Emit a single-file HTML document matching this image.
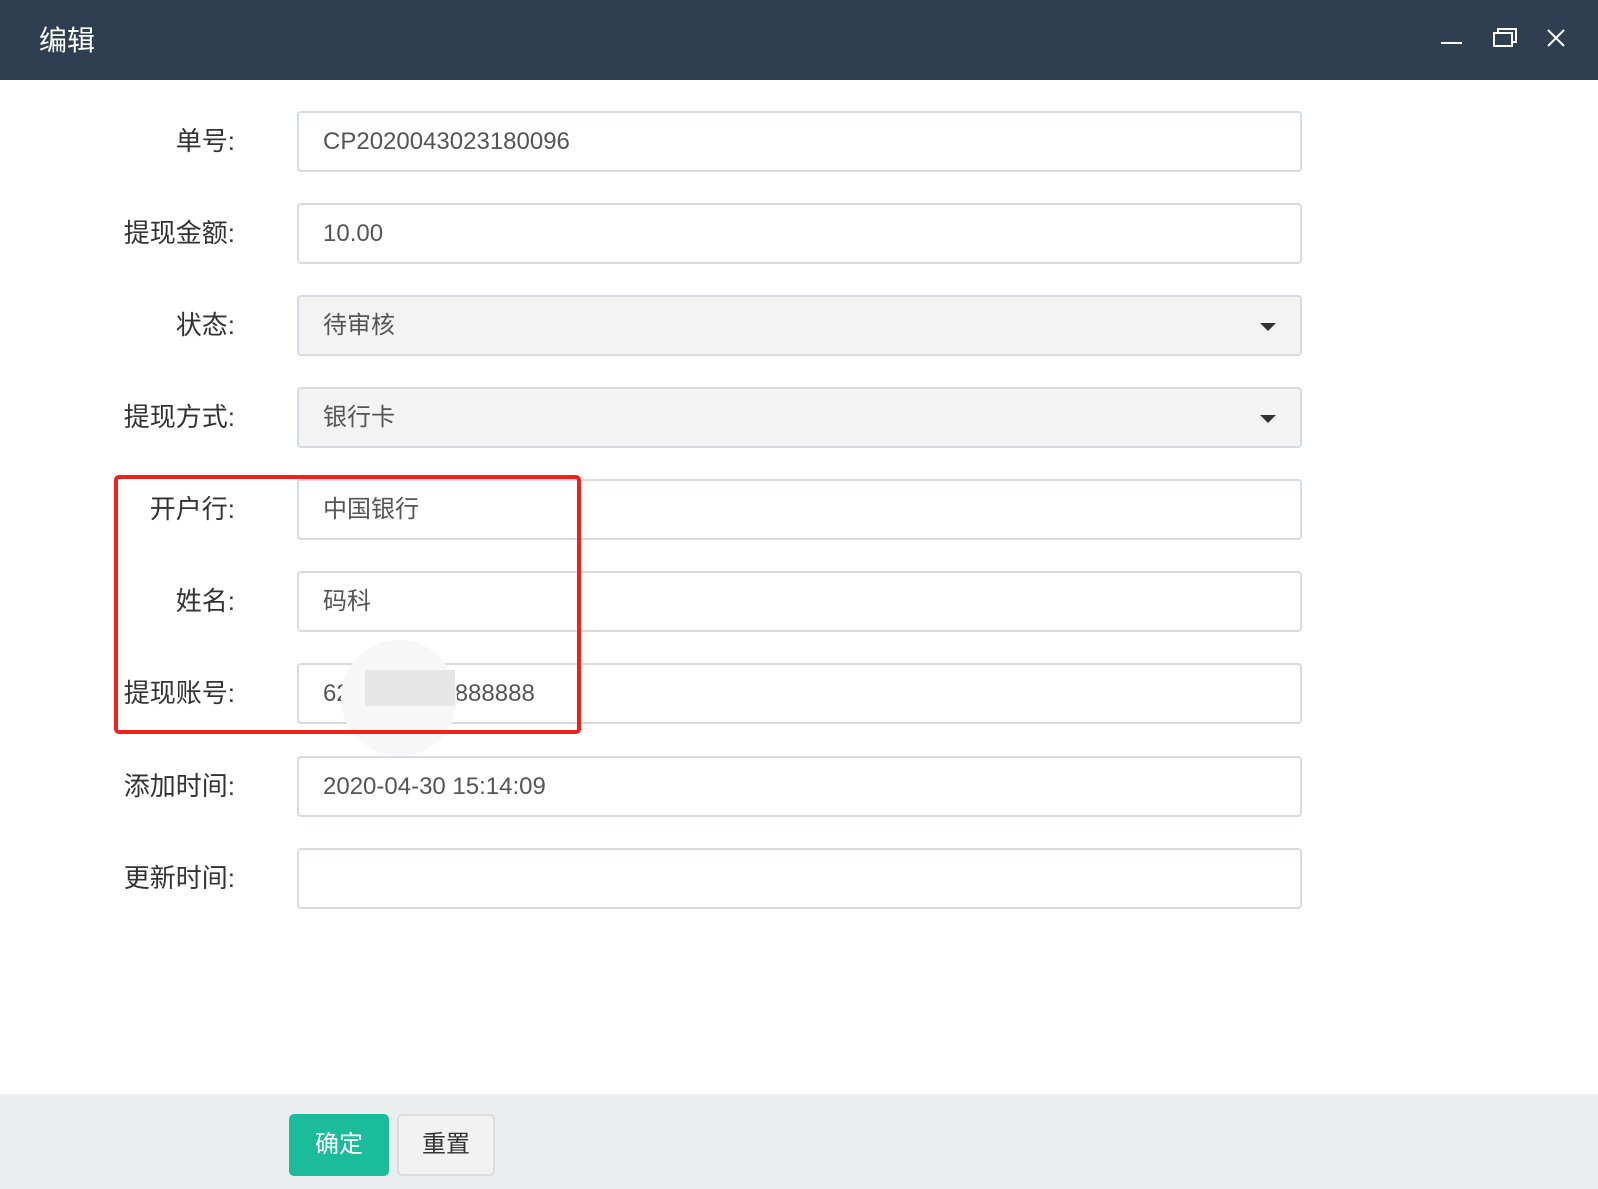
<!DOCTYPE html>
<html><head><meta charset="utf-8"><style>
body{margin:0;width:1598px;height:1189px;position:relative;background:#fff;font-family:"Liberation Sans","Noto Sans CJK SC",sans-serif;overflow:hidden}
.hd{position:absolute;left:0;top:0;width:1598px;height:80px;background:#2f3e50}
.hd .t{position:absolute;left:39px;top:19px;color:#fff;font-size:28px}
.lab{position:absolute;right:1363px;font-size:26px;color:#333;line-height:61px;white-space:nowrap}
.in{position:absolute;left:297px;border:2px solid #d7dae2;border-radius:4px;font-size:24px;color:#555;line-height:57px;padding-left:24px;box-sizing:border-box;width:1005px;height:61px}
.sel{background:#f3f3f3}
.arr{position:absolute;right:24px;top:26px;border-left:8px solid transparent;border-right:8px solid transparent;border-top:8px solid #333}
.ft{position:absolute;left:0;top:1094px;width:1598px;height:95px;background:#ebeeef}
.b{position:absolute;top:1114px;height:62px;border-radius:5px;font-size:24px;text-align:center;line-height:62px;box-sizing:border-box}
</style></head><body>
<div class="hd"><div class="t">编辑</div>
<svg style="position:absolute;left:1438px;top:26px" width="130" height="26" viewBox="0 0 130 26" fill="none" stroke="#fff" stroke-width="2">
<path d="M3 17H24"/><rect x="56" y="7" width="18" height="13"/><path d="M60 7V3H78V16H74"/><path d="M110 4L126 20M126 4L110 20"/></svg></div>

<div class="lab" style="top:111px">单号:</div><div class="in" style="top:111px">CP2020043023180096</div>
<div class="lab" style="top:203px">提现金额:</div><div class="in" style="top:203px">10.00</div>
<div class="lab" style="top:295px">状态:</div><div class="in sel" style="top:295px">待审核<div class="arr"></div></div>
<div class="lab" style="top:387px">提现方式:</div><div class="in sel" style="top:387px">银行卡<div class="arr"></div></div>
<div class="lab" style="top:479px">开户行:</div><div class="in" style="top:479px">中国银行</div>
<div class="lab" style="top:571px">姓名:</div><div class="in" style="top:571px">码科</div>
<div class="lab" style="top:663px">提现账号:</div><div class="in" style="top:663px">62<span style="display:inline-block;width:105px"></span>888888</div>
<div style="position:absolute;left:341px;top:640px;width:116px;height:116px;border-radius:50%;background:#f7f7f7"></div>
<div style="position:absolute;left:365px;top:670px;width:90px;height:36px;background:#e6e6e6"></div>
<div class="lab" style="top:756px">添加时间:</div><div class="in" style="top:756px">2020-04-30 15:14:09</div>
<div class="lab" style="top:848px">更新时间:</div><div class="in" style="top:848px"></div>
<div style="position:absolute;left:114px;top:475px;width:467px;height:259px;border:4px solid #f0201a;border-radius:5px;box-sizing:border-box"></div>
<div class="ft"></div>
<div class="b" style="left:289px;width:100px;background:#1bbc9b;color:#fff">确定</div>
<div class="b" style="left:397px;width:98px;background:#f2f2f2;border:2px solid #dcdcdc;color:#333;line-height:58px">重置</div>
</body></html>
